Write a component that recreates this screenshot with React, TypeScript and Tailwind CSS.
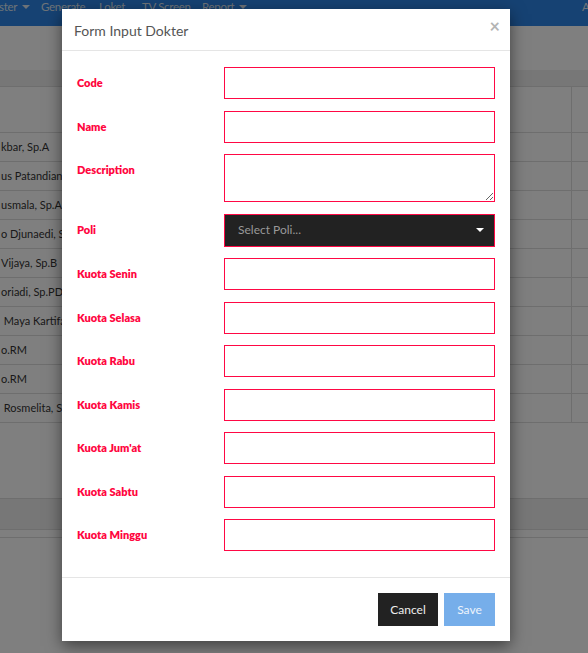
const NAV_ITEMS = [
  { label: 'ster', caret: true, width: 'w-[42px]' },
  { label: 'Generate', caret: false, width: 'w-[58px]' },
  { label: 'Loket', caret: false, width: 'w-[43px]' },
  { label: 'TV Screen', caret: false, width: 'w-[60px]' },
  { label: 'Report', caret: true, width: 'w-[50px]' },
];

const ROWS = [
  'kbar, Sp.A',
  'us Patandian',
  'usmala, Sp.A',
  'o Djunaedi, Sp',
  'Vijaya, Sp.B',
  'oriadi, Sp.PD',
  ' Maya Kartifa,',
  'o.RM',
  'o.RM',
  ' Rosmelita, Sp',
];

const KUOTA = ['Kuota Senin', 'Kuota Selasa', 'Kuota Rabu', 'Kuota Kamis', "Kuota Jum'at", 'Kuota Sabtu', 'Kuota Minggu'];

const Caret = () => (
  <span className="inline-block ml-[5px] align-middle w-0 h-0 border-l-[4px] border-r-[4px] border-t-[4px] border-l-transparent border-r-transparent border-t-current" />
);

// Page behind the dialog
const Background = () => (
  <div className="w-full h-full bg-white flex flex-col">
    <div className="h-[26px] bg-[#2c84e6] shrink-0 flex items-start text-[11.5px] tracking-[-0.3px] text-[#dde6f0] leading-[14px] whitespace-nowrap overflow-hidden">
      <div className="flex -ml-[1px]">
        {NAV_ITEMS.map(item => (
          <span key={item.label} className={`flex items-center shrink-0 ${item.width}`}>
            {item.label}
            {item.caret && <Caret />}
          </span>
        ))}
      </div>
      <span className="ml-auto -mr-[10px]">AD</span>
    </div>
    <div className="h-[44px] bg-[#fefefe] shrink-0" />
    <div className="h-[16px] bg-[#efefef] shrink-0" />
    <div className="border-t border-[#dddddd]">
      <div className="grid grid-cols-[572px_1fr] h-[46px] border-b border-[#dddddd]">
        <div className="border-r border-[#dddddd]" />
        <div />
      </div>
      {ROWS.map((name, i) => (
        <div key={i} className="grid grid-cols-[572px_1fr] h-[29px] border-b border-[#dddddd]">
          <div className="border-r border-[#dddddd] flex items-center pl-[1px] text-[11px] text-[#333] whitespace-pre overflow-hidden">
            {name}
          </div>
          <div />
        </div>
      ))}
    </div>
    <div className="h-[75px] shrink-0" />
    <div className="h-[32px] bg-[#efefef] border-t border-b border-[#dddddd] shrink-0" />
    <div className="h-[8px] border-b border-[#dddddd] shrink-0" />
  </div>
);

const Label = ({ children }: { children: React.ReactNode }) => (
  <label className="w-[147px] shrink-0 pt-[9px] text-[11px] leading-[14px] font-extrabold text-[#ff0640]">{children}</label>
);

const inputCls = 'flex-1 h-[32px] border border-[#ff0844] bg-white outline-none px-[12px] text-[13px]';

const FormInputDokter = () => (
  <div className="absolute left-[62px] top-[9px] w-[448px] bg-white shadow-[0_5px_15px_rgba(0,0,0,0.5)] text-[#333]">
    {/* Header */}
    <div className="h-[42px] px-[12px] flex items-center border-b border-[#e5e5e5]">
      <h4 className="text-[14px] text-[#555] pt-[2px]">Form Input Dokter</h4>
      <button className="ml-auto -mr-[2px] -mt-[7px] text-[18px] font-bold text-[#b4b4b4] leading-none">×</button>
    </div>

    {/* Body */}
    <div className="px-[15px] pt-[16px] pb-[26px] flex flex-col gap-[11.5px]">
      <div className="flex">
        <Label>Code</Label>
        <input className={inputCls} />
      </div>
      <div className="flex">
        <Label>Name</Label>
        <input className={inputCls} />
      </div>
      <div className="flex">
        <Label>Description</Label>
        <textarea className="flex-1 h-[48px] border border-[#ff0844] bg-white outline-none px-[12px] text-[13px] resize-y" />
      </div>
      <div className="flex">
        <Label>Poli</Label>
        <div className="flex-1 h-[33px] border border-[#ff0844] bg-[#222222] flex items-center pl-[13px] pr-[10px]">
          <span className="text-[12px] text-[#999]">Select Poli...</span>
          <span className="ml-auto w-0 h-0 border-l-[4px] border-r-[4px] border-t-[4px] border-l-transparent border-r-transparent border-t-white" />
        </div>
      </div>
      {KUOTA.map(label => (
        <div key={label} className="flex">
          <Label>{label}</Label>
          <input className={inputCls} />
        </div>
      ))}
    </div>

    {/* Footer */}
    <div className="border-t border-[#e5e5e5] px-[15px] pt-[15px] pb-[15px] flex justify-end gap-[6px]">
      <button className="h-[33px] w-[60px] bg-[#222222] text-[12px] text-[#eeeeee]">Cancel</button>
      <button className="h-[33px] w-[51px] bg-[#76aeea] text-[12px] text-[#eef4fc]">Save</button>
    </div>
  </div>
);

export default function App() {
  return (
    <div className="relative w-[588px] h-[653px] overflow-hidden font-['Lato','Noto_Sans',sans-serif]">
      <Background />
      <div className="absolute inset-0 bg-black/50" />
      <FormInputDokter />
    </div>
  );
}
